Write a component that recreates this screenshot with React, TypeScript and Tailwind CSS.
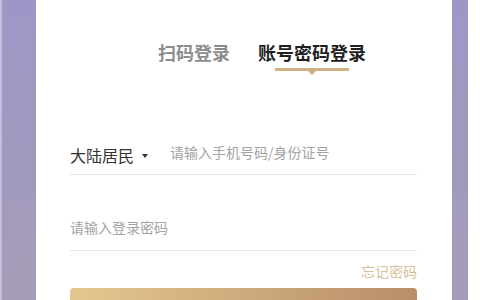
import React from 'react'

const FONT = { fontFamily: '"Noto Sans CJK SC", "Noto Sans", sans-serif' }

function Tabs() {
  return (
    <div className="flex pl-[88px]">
      <div className="text-[18px] leading-[18px] font-bold text-[#8c8c8c]">扫码登录</div>
      <div className="ml-[28px] flex flex-col items-center">
        <div className="text-[18px] leading-[18px] font-bold text-[#1f1f1f]">账号密码登录</div>
        <div className="relative mt-[7px] h-[3px] w-[74px] bg-[#cfb283]">
          <div className="absolute left-1/2 top-[3px] -translate-x-1/2 w-0 h-0 border-l-[4px] border-r-[4px] border-t-[4px] border-l-transparent border-r-transparent border-t-[#cfb283]" />
        </div>
      </div>
    </div>
  )
}

export default function App() {
  return (
    <div className="w-[480px] h-[300px] overflow-hidden flex bg-white" style={FONT}>
      <div className="w-[36px] h-full border-l-2 border-[#c3bedb] bg-gradient-to-b from-[#9c97c7] to-[#a69cb7]" />
      <div className="flex-1 h-full bg-white pl-[34px] pr-[35px] pt-[43px]">
        <Tabs />

        {/* 手机号/身份证 */}
        <div className="mt-[65px] h-[39px] flex items-center border-b border-[#e6e6e6]">
          <span className="text-[16px] leading-[20px] text-[#333]">大陆居民</span>
          <span className="ml-[8px] mt-[2px] w-0 h-0 border-l-[3px] border-r-[3px] border-t-[4px] border-l-transparent border-r-transparent border-t-[#333]" />
          <span className="ml-[22px] mb-[6px] text-[14px] leading-[20px] text-[#a3a3a3]">请输入手机号码/身份证号</span>
        </div>

        {/* 密码 */}
        <div className="pt-[42px] pb-[13px] border-b border-[#e6e6e6]">
          <div className="text-[14px] leading-[20px] text-[#a3a3a3]">请输入登录密码</div>
        </div>

        <div className="mt-[10px] flex justify-end">
          <span className="text-[14px] leading-[20px] text-[#d8bf99]">忘记密码</span>
        </div>

        <button type="button" className="mt-[7px] w-full h-[44px] rounded-[4px] bg-gradient-to-r from-[#e4c78f] to-[#b88e69]" />
      </div>
      <div className="w-[16px] h-full bg-gradient-to-b from-[#9c97c7] to-[#a69cb7]" />
      <div className="w-[12px] h-full bg-white" />
    </div>
  )
}
